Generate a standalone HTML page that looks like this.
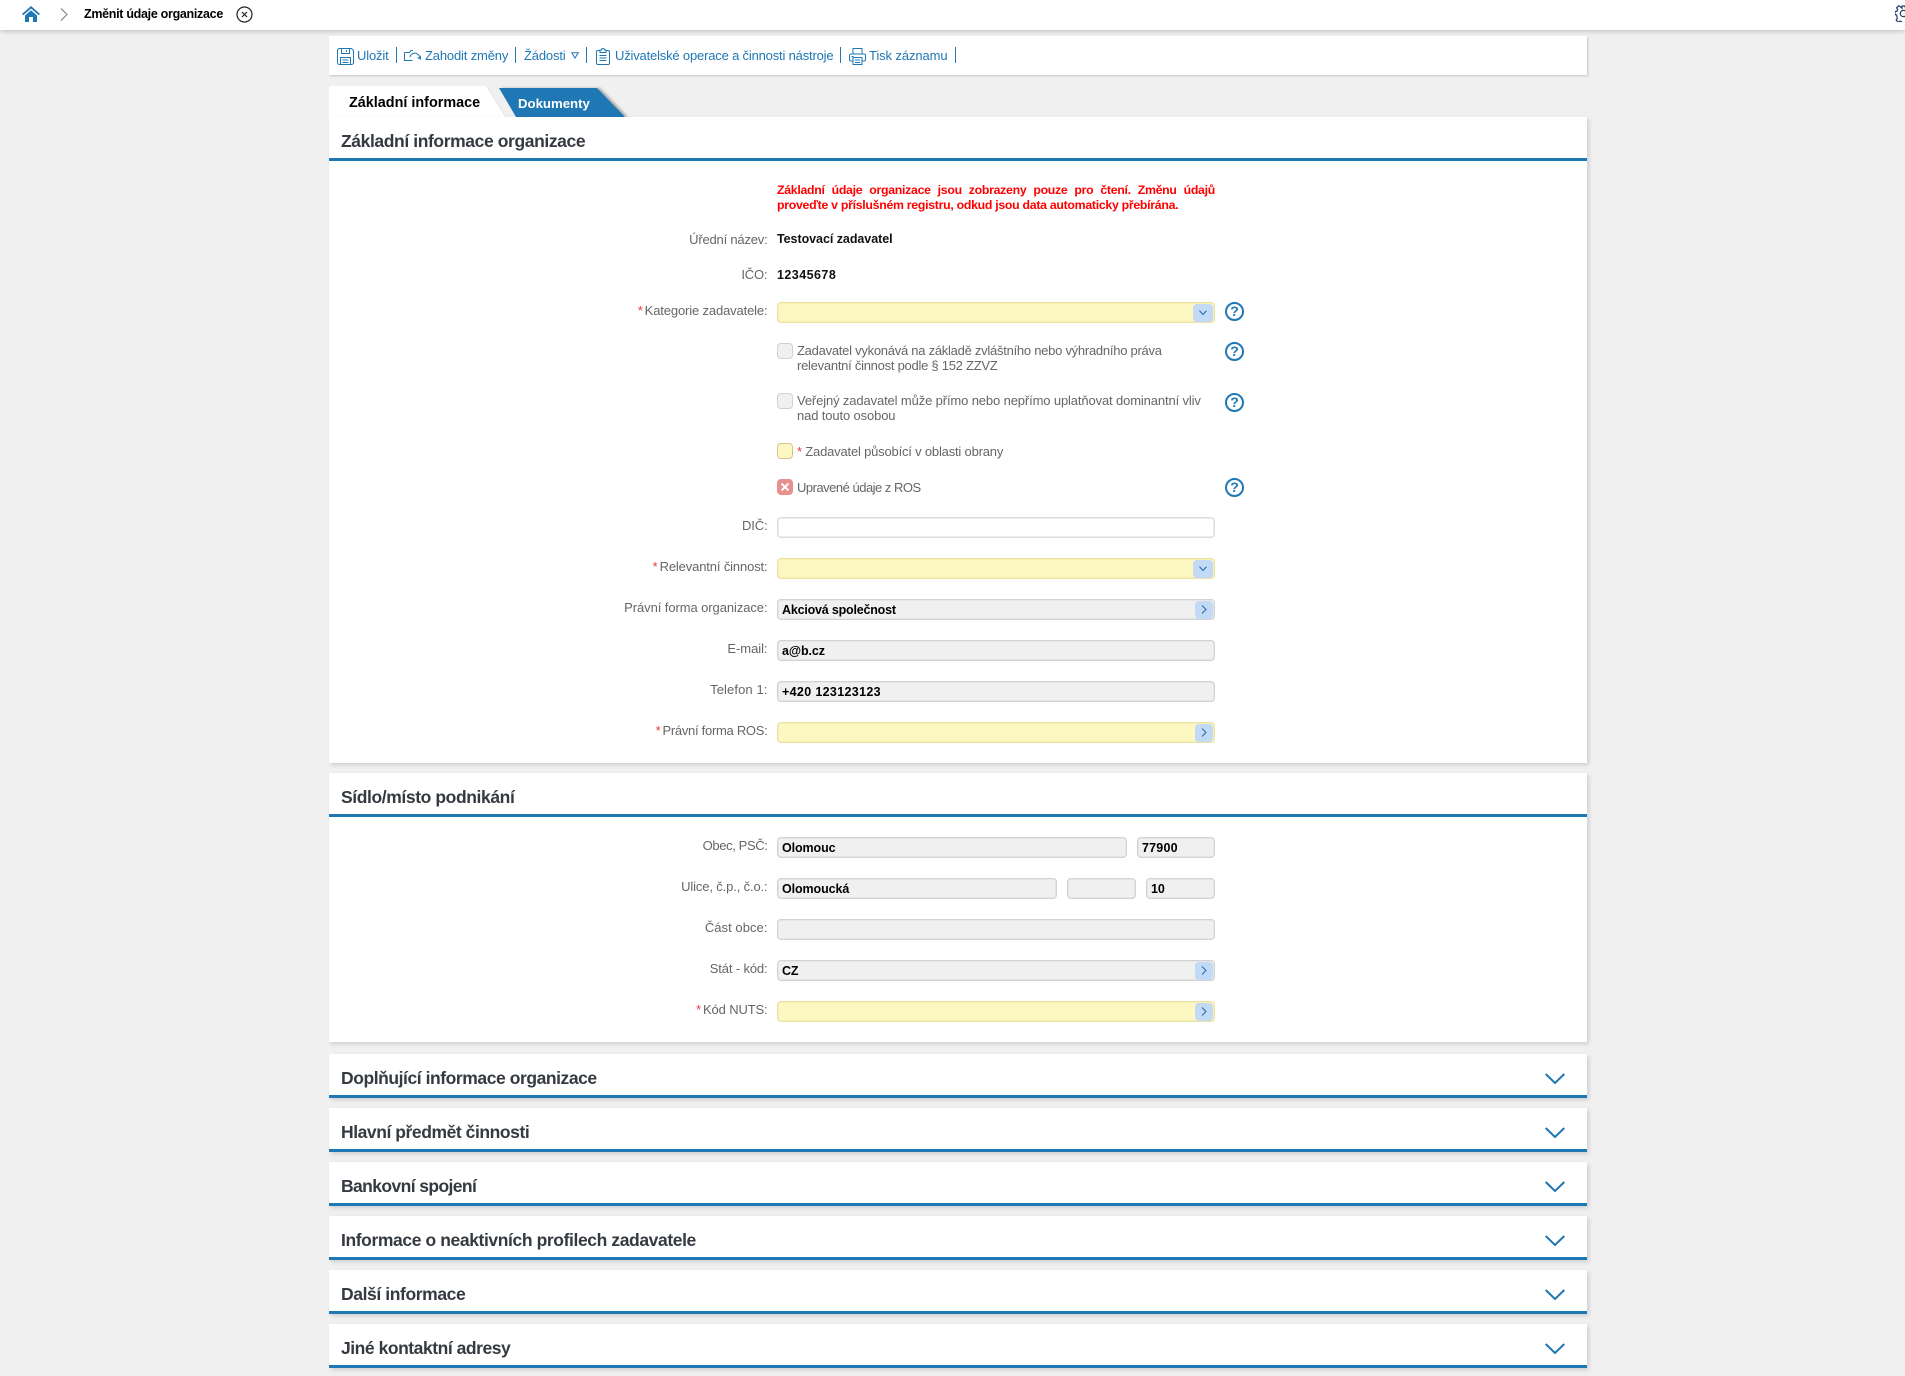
<!DOCTYPE html>
<html lang="cs"><head><meta charset="utf-8"><title>Změnit údaje organizace</title>
<style>
html,body{margin:0;padding:0}
body{width:1905px;height:1376px;position:relative;overflow:hidden;background:#f0f0f0;font-family:"Liberation Sans",sans-serif;font-size:13px;color:#666}
div,span,svg{position:absolute}
span.n{position:static}
.top{left:0;top:0;width:1905px;height:30px;background:#fff;box-shadow:0 1px 5px rgba(0,0,0,.22)}
.card{left:329px;width:1258px;background:#fff;box-shadow:2px 2px 4px rgba(0,0,0,.14)}
.line{left:329px;width:1258px;height:3px;background:#1f77b4}
.h{left:341px;font-weight:bold;font-size:17.5px;line-height:22px;color:#343a40;white-space:nowrap;letter-spacing:-.4px;margin-top:-1px}
.t{color:#1f77b4;font-size:13px;line-height:16px;top:48px;white-space:nowrap;letter-spacing:-.16px}
.s{width:1px;height:16px;top:47px;background:#1f77b4}
.l{left:329px;width:438.5px;text-align:right;line-height:16px;white-space:nowrap;font-size:13px;letter-spacing:-.14px;margin-top:1px}
.l i,.a{color:#e5383b;font-style:normal;margin-right:2px}
.v{left:777px;font-weight:bold;color:#111;line-height:16px;white-space:nowrap;font-size:12.5px}
.f{height:21px;box-sizing:border-box;border:1px solid #d2d2d2;border-radius:4px;left:777px;width:438px;background:#f0f0f0;color:#000;font-weight:bold;font-size:12.5px;line-height:20px;padding-left:4px;box-shadow:inset 0 0 0 .5px #ddd;white-space:nowrap;letter-spacing:-.1px}
.y{background:#fdf7c1;border-color:#ece3a2;box-shadow:inset 0 0 0 .5px #f0e8ae}
.w{background:#fff;border-color:#dcdcdc}
.b{left:1193px;width:20px;height:18px;background:#c2daf5;border-radius:4px}
.r{left:1195px;width:18px;height:18px;background:#c2daf5;border-radius:4px}
.c{left:777px;width:16px;height:16px;box-sizing:border-box;border:1px solid #d0d0d0;border-radius:4px;background:#f0f0f0}
.ct{left:797px;line-height:15px;white-space:nowrap;font-size:13px}
.q{left:1225px;width:19px;height:19px;box-sizing:border-box;border:2px solid #1f77b4;border-radius:50%;color:#1f77b4;font-weight:bold;font-size:14px;line-height:15px;text-align:center}
.ch{left:1545px;width:20px;height:12px}
</style></head><body>

<div class="top"></div>
<svg style="left:22px;top:6px" width="18" height="16" viewBox="0 0 18 16"><path d="M9 0L0 8l1.2 1.3L9 2.5l7.8 6.8L18 8z" fill="#1f77b4"/><path d="M3 9.5L9 4.3l6 5.2V16h-4v-5H7v5H3z" fill="#1f77b4"/></svg>
<svg style="left:60px;top:8px" width="8" height="13" viewBox="0 0 8 13"><path d="M1 .5L7 6.5 1 12.5" fill="none" stroke="#777" stroke-width="1"/></svg>
<div style="left:84px;top:6px;font-weight:bold;color:#000;font-size:12.5px;line-height:17px;white-space:nowrap;letter-spacing:-.3px">Změnit údaje organizace</div>
<svg style="left:236px;top:6px" width="17" height="17" viewBox="0 0 17 17"><circle cx="8.5" cy="8.5" r="7.5" fill="none" stroke="#222" stroke-width="1.2"/><path d="M6 6l5 5M11 6l-5 5" stroke="#222" stroke-width="1.2"/></svg>
<svg style="left:1895px;top:5px" width="17" height="17" viewBox="0 0 17 17"><path d="M7 1h3l.4 2 1.600.7 1.800-1.100 2 2-1.100 1.800.7 1.600 2 .4v3l-2 .4-.7 1.600 1.100 1.800-2 2-1.800-1.100-1.600.7-.4 2H7l-.4-2-1.600-.7-1.800 1.100-2-2 1.100-1.800L1.600 10 0 9.600v-3L2 6.200l.7-1.600L1.600 2.800l2-2 1.800 1.100L7 3.200z" fill="none" stroke="#1c3c66" stroke-width="1.200"/><circle cx="8.500" cy="8.500" r="3.200" fill="none" stroke="#1c3c66" stroke-width="1.200"/></svg>

<div class="card" style="top:36px;height:39px;box-shadow:1px 1px 2px rgba(0,0,0,.18)"></div>
<svg style="left:337px;top:48px" width="17" height="17" viewBox="0 0 17 17" fill="none" stroke="#1f77b4" stroke-width="1"><path d="M2.500.5h12l2 2v12a2 2 0 0 1-2 2h-12a2 2 0 0 1-2-2v-12a2 2 0 0 1 2-2z"/><path d="M4.500.5v5h8v-5M9.500 2v2M3.500 9.500h10v7h-10zM5.500 12h6M5.500 14.500h6"/></svg>
<div class="t" style="left:357px">Uložit</div><div class="s" style="left:396px"></div>
<svg style="left:404px;top:48px" width="17" height="14" viewBox="0 0 17 14" fill="none" stroke="#1f77b4" stroke-width="1"><path d="M.500 4.500v8h8M.500 4.500h5l1.500-2h2M6 9c1-4 6-5.500 9-1.500l1.500 3M13.500 9.500l3 1.500.5-3.500"/></svg>
<div class="t" style="left:425px">Zahodit změny</div><div class="s" style="left:515px"></div>
<div class="t" style="left:524px">Žádosti</div>
<svg style="left:571px;top:52px" width="8" height="7" viewBox="0 0 8 7"><path d="M.700.700h6.600L4 6z" fill="none" stroke="#1f77b4"/></svg>
<div class="s" style="left:586px"></div>
<svg style="left:596px;top:48px" width="14" height="17" viewBox="0 0 14 17" fill="none" stroke="#1f77b4" stroke-width="1"><path d="M4 2.500H2a1.500 1.500 0 0 0-1.500 1.500v11A1.500 1.500 0 0 0 2 16.500h10a1.500 1.500 0 0 0 1.500-1.500V4A1.500 1.500 0 0 0 12 2.500h-2M4 4.500v-2.500h1.500a1.500 1.500 0 0 1 3 0H10v2.500zM3.500 7.500h7M3.500 10h7M3.500 12.500h7"/></svg>
<div class="t" style="left:615px;letter-spacing:-.18px">Uživatelské operace a činnosti nástroje</div><div class="s" style="left:840px"></div>
<svg style="left:849px;top:48px" width="17" height="17" viewBox="0 0 17 17" fill="none" stroke="#1f77b4" stroke-width="1"><path d="M4 6V.500h9V6M4 13H2a1.500 1.500 0 0 1-1.500-1.500v-4A1.500 1.500 0 0 1 2 6h13a1.500 1.500 0 0 1 1.500 1.500v4A1.500 1.500 0 0 1 15 13h-2M4 9.500h9v7H4zM6 12h5M6 14.500h5M2.500 8.500h2"/></svg>
<div class="t" style="left:869px;letter-spacing:-.1px">Tisk záznamu</div><div class="s" style="left:955px"></div>

<svg style="left:329px;top:86px" width="310" height="32" viewBox="0 0 310 32"><defs><filter id="sh" x="-10%" y="-10%" width="120%" height="120%"><feGaussianBlur stdDeviation="1.200"/></filter></defs>
<path d="M0 0H157L176 31H0z" fill="#e4e4e4" filter="url(#sh)" transform="translate(1 0)"/><path d="M0 0H157L176 31H0z" fill="#fff"/>
<path d="M170 2H268L296 31H187z" fill="#aaa" filter="url(#sh)" transform="translate(3 0)"/><path d="M170 2H268L296 31H187z" fill="#1f77b4"/></svg>
<div style="left:349px;top:95px;font-weight:bold;font-size:14.4px;line-height:17px;color:#000;white-space:nowrap">Základní informace</div>
<div style="left:518px;top:95px;font-weight:bold;font-size:13.2px;line-height:17px;color:#fff;white-space:nowrap">Dokumenty</div>

<div class="card" style="top:117px;height:646px"></div>
<div class="h" style="top:131px">Základní informace organizace</div><div class="line" style="top:158px"></div>
<div style="left:777px;top:183px;width:438px;color:#f00;font-weight:bold;font-size:12.3px;letter-spacing:-.28px;line-height:15px;text-align:justify">Základní údaje organizace jsou zobrazeny pouze pro čtení. Změnu údajů proveďte v příslušném registru, odkud jsou data automaticky přebírána.</div>

<div class="l" style="top:231px;letter-spacing:-.2px">Úřední název:</div><div class="v" style="top:231px;letter-spacing:-.05px">Testovací zadavatel</div>
<div class="l" style="top:267px;margin-top:0">IČO:</div><div class="v" style="top:267px;letter-spacing:.45px">12345678</div>

<div class="l" style="top:302px"><i>*</i>Kategorie zadavatele:</div>
<div class="f y" style="top:302px"></div><div class="b" style="top:304px"></div>
<svg style="left:1199px;top:310px" width="8" height="6" viewBox="0 0 8 6"><path d="M.500.800L4 4.500 7.500.800" fill="none" stroke="#2b6cb0" stroke-width="1.100"/></svg>
<div class="q" style="top:302px">?</div>

<div class="c" style="top:343px"></div>
<div class="ct" style="top:343px;letter-spacing:-.26px">Zadavatel vykonává na základě zvláštního nebo výhradního práva<br>relevantní činnost podle § 152 ZZVZ</div>
<div class="q" style="top:342px">?</div>
<div class="c" style="top:393px"></div>
<div class="ct" style="top:393px;letter-spacing:-.13px">Veřejný zadavatel může přímo nebo nepřímo uplatňovat dominantní vliv<br>nad touto osobou</div>
<div class="q" style="top:393px">?</div>
<div class="c" style="top:443px;background:#fdf7c1;border-color:#cfc88e"></div>
<div class="ct" style="top:444px;letter-spacing:-.19px"><span class="n a" style="margin-right:0">*</span> Zadavatel působící v oblasti obrany</div>
<div class="c" style="top:479px;background:#e8908f;border-color:#e8908f"></div>
<svg style="left:781px;top:483px" width="8" height="8" viewBox="0 0 8 8"><path d="M.500.500l7 7M7.500.500l-7 7" stroke="#fff" stroke-width="2"/></svg>
<div class="ct" style="top:480px;letter-spacing:-.5px">Upravené údaje z ROS</div>
<div class="q" style="top:478px">?</div>

<div class="l" style="top:518px;margin-top:0">DIČ:</div><div class="f w" style="top:517px"></div>
<div class="l" style="top:558px"><i>*</i>Relevantní činnost:</div><div class="f y" style="top:558px"></div><div class="b" style="top:560px"></div>
<svg style="left:1199px;top:566px" width="8" height="6" viewBox="0 0 8 6"><path d="M.500.800L4 4.500 7.500.800" fill="none" stroke="#2b6cb0" stroke-width="1.100"/></svg>
<div class="l" style="top:599px;letter-spacing:-.08px">Právní forma organizace:</div><div class="f" style="top:599px;letter-spacing:-.2px">Akciová společnost</div><div class="r" style="top:601px"></div>
<svg style="left:1201px;top:605px" width="6" height="9" viewBox="0 0 6 9"><path d="M1 .500L5 4.500 1 8.500" fill="none" stroke="#2b6cb0" stroke-width="1.100"/></svg>
<div class="l" style="top:640px;letter-spacing:-.05px">E-mail:</div><div class="f" style="top:640px">a@b.cz</div>
<div class="l" style="top:681px;letter-spacing:.1px">Telefon 1:</div><div class="f" style="top:681px;letter-spacing:.34px">+420 123123123</div>
<div class="l" style="top:722px;letter-spacing:-.28px"><i>*</i>Právní forma ROS:</div><div class="f y" style="top:722px"></div><div class="r" style="top:724px"></div>
<svg style="left:1201px;top:728px" width="6" height="9" viewBox="0 0 6 9"><path d="M1 .500L5 4.500 1 8.500" fill="none" stroke="#2b6cb0" stroke-width="1.100"/></svg>

<div class="card" style="top:773px;height:269px"></div>
<div class="h" style="top:787px">Sídlo/místo podnikání</div><div class="line" style="top:814px"></div>
<div class="l" style="top:837px;letter-spacing:-.38px">Obec, PSČ:</div><div class="f" style="top:837px;width:350px">Olomouc</div><div class="f" style="top:837px;left:1137px;width:78px;letter-spacing:.2px">77900</div>
<div class="l" style="top:878px">Ulice, č.p., č.o.:</div><div class="f" style="top:878px;width:280px">Olomoucká</div><div class="f" style="top:878px;left:1067px;width:69px"></div><div class="f" style="top:878px;left:1146px;width:69px">10</div>
<div class="l" style="top:919px;letter-spacing:.05px">Část obce:</div><div class="f" style="top:919px"></div>
<div class="l" style="top:960px">Stát - kód:</div><div class="f" style="top:960px">CZ</div><div class="r" style="top:962px"></div>
<svg style="left:1201px;top:966px" width="6" height="9" viewBox="0 0 6 9"><path d="M1 .500L5 4.500 1 8.500" fill="none" stroke="#2b6cb0" stroke-width="1.100"/></svg>
<div class="l" style="top:1001px"><i>*</i>Kód NUTS:</div><div class="f y" style="top:1001px"></div><div class="r" style="top:1003px"></div>
<svg style="left:1201px;top:1007px" width="6" height="9" viewBox="0 0 6 9"><path d="M1 .500L5 4.500 1 8.500" fill="none" stroke="#2b6cb0" stroke-width="1.100"/></svg>

<div class="card" style="top:1054px;height:44px"></div><div class="line" style="top:1095px"></div><div class="h" style="top:1068px;letter-spacing:-.44px">Doplňující informace organizace</div>
<svg class="ch" style="top:1073px" viewBox="0 0 20 12"><path d="M.700 1L10 10 19.300 1" fill="none" stroke="#1f77b4" stroke-width="2"/></svg>
<div class="card" style="top:1108px;height:44px"></div><div class="line" style="top:1149px"></div><div class="h" style="top:1122px;letter-spacing:-.44px">Hlavní předmět činnosti</div>
<svg class="ch" style="top:1127px" viewBox="0 0 20 12"><path d="M.700 1L10 10 19.300 1" fill="none" stroke="#1f77b4" stroke-width="2"/></svg>
<div class="card" style="top:1162px;height:44px"></div><div class="line" style="top:1203px"></div><div class="h" style="top:1176px;letter-spacing:-.6px">Bankovní spojení</div>
<svg class="ch" style="top:1181px" viewBox="0 0 20 12"><path d="M.700 1L10 10 19.300 1" fill="none" stroke="#1f77b4" stroke-width="2"/></svg>
<div class="card" style="top:1216px;height:44px"></div><div class="line" style="top:1257px"></div><div class="h" style="top:1230px">Informace o neaktivních profilech zadavatele</div>
<svg class="ch" style="top:1235px" viewBox="0 0 20 12"><path d="M.700 1L10 10 19.300 1" fill="none" stroke="#1f77b4" stroke-width="2"/></svg>
<div class="card" style="top:1270px;height:44px"></div><div class="line" style="top:1311px"></div><div class="h" style="top:1284px">Další informace</div>
<svg class="ch" style="top:1289px" viewBox="0 0 20 12"><path d="M.700 1L10 10 19.300 1" fill="none" stroke="#1f77b4" stroke-width="2"/></svg>
<div class="card" style="top:1324px;height:44px"></div><div class="line" style="top:1365px"></div><div class="h" style="top:1338px;letter-spacing:-.46px">Jiné kontaktní adresy</div>
<svg class="ch" style="top:1343px" viewBox="0 0 20 12"><path d="M.700 1L10 10 19.300 1" fill="none" stroke="#1f77b4" stroke-width="2"/></svg>
</body></html>
